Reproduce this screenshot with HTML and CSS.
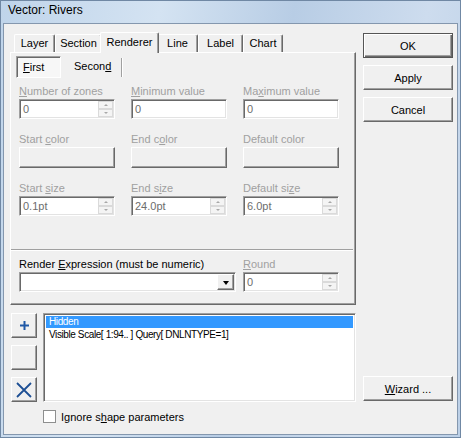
FILE: index.html
```html
<!DOCTYPE html>
<html>
<head>
<meta charset="utf-8">
<link rel="stylesheet" href="styles.css">
</head>
<body>
<div class="window">
  <div class="titlebar">Vector: Rivers</div>
  <div class="client">
    <div class="leftcol">
      <div class="tabctl">
        <div class="tabs">
          <div class="tab t-layer">Layer</div>
          <div class="tab t-section">Section</div>
          <div class="tab active t-renderer">Renderer</div>
          <div class="tab t-line">Line</div>
          <div class="tab t-label">Label</div>
          <div class="tab t-chart">Chart</div>
        </div>
        <div class="panel">
          <div class="subtabs">
            <div class="subtab pressed"><u>F</u>irst</div>
            <div class="subtab second">Secon<u>d</u></div>
          </div>
          <div class="grid">
            <div class="field">
              <div class="lbl"><u>N</u>umber of zones</div>
              <div class="edit"><span class="val">0</span><span class="spin"><span class="sb"><i class="up"></i></span><span class="sb"><i class="dn"></i></span></span></div>
            </div>
            <div class="field">
              <div class="lbl"><u>M</u>inimum value</div>
              <div class="edit"><span class="val">0</span></div>
            </div>
            <div class="field">
              <div class="lbl">Ma<u>x</u>imum value</div>
              <div class="edit"><span class="val">0</span></div>
            </div>
            <div class="field">
              <div class="lbl">Start <u>c</u>olor</div>
              <div class="cbtn"></div>
            </div>
            <div class="field">
              <div class="lbl">End c<u>o</u>lor</div>
              <div class="cbtn"></div>
            </div>
            <div class="field">
              <div class="lbl">Default color</div>
              <div class="cbtn"></div>
            </div>
            <div class="field">
              <div class="lbl">Start <u>s</u>ize</div>
              <div class="edit"><span class="val">0.1pt</span><span class="spin"><span class="sb"><i class="up"></i></span><span class="sb"><i class="dn"></i></span></span></div>
            </div>
            <div class="field">
              <div class="lbl">End s<u>i</u>ze</div>
              <div class="edit"><span class="val">24.0pt</span><span class="spin"><span class="sb"><i class="up"></i></span><span class="sb"><i class="dn"></i></span></span></div>
            </div>
            <div class="field">
              <div class="lbl">Default si<u>z</u>e</div>
              <div class="edit"><span class="val">6.0pt</span><span class="spin"><span class="sb"><i class="up"></i></span><span class="sb"><i class="dn"></i></span></span></div>
            </div>
          </div>
          <div class="sep"></div>
          <div class="exprrow">
            <div class="field expr">
              <div class="lbl enabled">Render <u>E</u>xpression (must be numeric)</div>
              <div class="edit combo"><span class="val"></span><span class="ddbtn"><i class="tri"></i></span></div>
            </div>
            <div class="field">
              <div class="lbl"><u>R</u>ound</div>
              <div class="edit"><span class="val">0</span><span class="spin"><span class="sb"><i class="up"></i></span><span class="sb"><i class="dn"></i></span></span></div>
            </div>
          </div>
        </div>
      </div>
      <div class="lower">
        <div class="sidebtns">
          <div class="btn sq">
            <svg width="9" height="9" viewBox="0 0 9 9"><path d="M4.5 0V9M0 4.5H9" stroke="#1f58a6" stroke-width="2"/></svg>
          </div>
          <div class="btn sq"></div>
          <div class="btn sq">
            <svg width="16" height="16" viewBox="0 0 16 16"><path d="M1 1L15 15M15 1L1 15" stroke="#1d4f94" stroke-width="1.8"/></svg>
          </div>
        </div>
        <div class="list">
          <div class="item sel">Hidden</div>
          <div class="item">Visible Scale[ 1:94.. ] Query[ DNLNTYPE=1]</div>
        </div>
      </div>
      <div class="check">
        <span class="box"></span>
        <span>Ignore s<u>h</u>ape parameters</span>
      </div>
    </div>
    <div class="rightcol">
      <div class="btn pbtn default">OK</div>
      <div class="btn pbtn">Apply</div>
      <div class="btn pbtn">Cancel</div>
      <div class="btn pbtn wizard"><u>W</u>izard ...</div>
    </div>
  </div>
</div>
</body>
</html>
```
FILE: styles.css
```css
* { box-sizing: border-box; }
html, body { margin: 0; padding: 0; }
body {
  width: 461px;
  height: 438px;
  overflow: hidden;
  font-family: "Liberation Sans", Arial, sans-serif;
  font-size: 11px;
  color: #000;
  background: #c6d8ec;
}
u { text-decoration: underline; text-underline-offset: 1px; }

.window {
  width: 461px;
  height: 438px;
  border: 1px solid #7088a4;
  background: linear-gradient(100deg, #bfd4ea 0%, #d4e3f2 30%, #b8cde5 55%, #cddcee 80%, #bcd0e7 100%);
  display: flex;
  flex-direction: column;
}
.titlebar {
  height: 22px;
  line-height: 19px;
  padding-left: 7px;
  font-size: 12px;
  color: #000;
}
.client {
  flex: 1;
  margin: 0 2px 2px 2px;
  border: 1px solid #8497ae;
  background: #f0f0f0;
  display: flex;
  padding: 8px 4px 0 6px;
  gap: 7px;
}
.leftcol {
  width: 346px;
  display: flex;
  flex-direction: column;
}
.rightcol {
  width: 90px;
  display: flex;
  flex-direction: column;
  padding-top: 1px;
  gap: 7px;
}

/* tabs */
.tabs {
  display: flex;
  align-items: flex-end;
  height: 20px;
  padding-left: 4px;
}
.tab {
  height: 18px;
  line-height: 17px;
  text-align: center;
  border-top: 1px solid #fff;
  border-left: 1px solid #fff;
  border-right: 1px solid #696969;
  box-shadow: inset -1px 0 #a0a0a0;
  border-radius: 2px 2px 0 0;
  background: #f0f0f0;
}
.tab.active {
  height: 21px;
  margin: 0 -2px -1px -2px;
  line-height: 18px;
  position: relative;
  z-index: 1;
}
.t-layer { width: 41px; }
.t-section { width: 47px; }
.t-renderer { width: 59px; }
.t-line { width: 41px; }
.t-label { width: 45px; }
.t-chart { width: 40px; }

.panel {
  height: 253px;
  border: 1px solid;
  border-color: #fff #696969 #696969 #fff;
  box-shadow: inset -1px -1px #a0a0a0;
  padding: 3px 0 0 0;
}
.subtabs {
  display: flex;
  padding-left: 5px;
  height: 22px;
}
.subtab {
  height: 22px;
  line-height: 21px;
}
.subtab.pressed {
  width: 45px;
  padding-left: 6px;
  border: 1px solid;
  border-color: #a0a0a0 #fff #fff #a0a0a0;
  box-shadow: inset 1px 1px #696969;
  background: #f7f7f7;
}
.subtab.second {
  width: 60px;
  margin-left: 1px;
  padding-left: 12px;
  border-right: 1px solid #a0a0a0;
  box-shadow: 1px 0 #fff;
  margin-top: 2px;
  height: 19px;
  line-height: 16px;
}

.grid {
  display: grid;
  grid-template-columns: repeat(3, 96px);
  column-gap: 16px;
  row-gap: 13px;
  margin: 6px 0 0 8px;
}
.field {
  display: flex;
  flex-direction: column;
}
.lbl {
  height: 15px;
  line-height: 15px;
  color: #a0a0a0;
  white-space: nowrap;
}
.lbl.enabled { color: #000; }

.edit {
  height: 20px;
  display: flex;
  align-items: center;
  background: #fff;
  border: 1px solid;
  border-color: #a0a0a0 #fff #fff #a0a0a0;
  box-shadow: inset 1px 1px #696969, inset -1px -1px #e3e3e3;
  padding: 2px 1px 2px 2px;
}
.val {
  flex: 1;
  color: #6d6d6d;
  padding-left: 1px;
  line-height: 14px;
}
.spin {
  width: 15px;
  height: 16px;
  display: flex;
  flex-direction: column;
}
.sb {
  flex: 1;
  border: 1px solid #dadada;
  background: #f4f4f4;
  display: flex;
  align-items: center;
  justify-content: center;
}
.up {
  width: 0; height: 0;
  border-left: 2px solid transparent;
  border-right: 2px solid transparent;
  border-bottom: 2px solid #a8a8a8;
}
.dn {
  width: 0; height: 0;
  border-left: 2px solid transparent;
  border-right: 2px solid transparent;
  border-top: 2px solid #a8a8a8;
}
.cbtn {
  height: 21px;
  border: 1px solid;
  border-color: #fff #696969 #696969 #fff;
  box-shadow: inset -1px -1px #a0a0a0;
  background: #f0f0f0;
}

.sep {
  margin-top: 33px;
  height: 2px;
  border-top: 1px solid #a0a0a0;
  border-bottom: 1px solid #fff;
  margin-right: 2px;
}
.exprrow {
  display: flex;
  gap: 7px;
  margin: 6px 0 0 8px;
}
.expr { width: 217px; }
.exprrow .field:last-child { width: 96px; }
.combo { padding-right: 1px; }
.ddbtn {
  width: 17px;
  height: 16px;
  border: 1px solid;
  border-color: #fff #696969 #696969 #fff;
  box-shadow: inset -1px -1px #a0a0a0;
  background: #f0f0f0;
  display: flex;
  align-items: center;
  justify-content: center;
}
.tri {
  width: 0; height: 0;
  border-left: 3.5px solid transparent;
  border-right: 3.5px solid transparent;
  border-top: 4px solid #000;
  margin-top: 1px;
}

/* lower */
.lower {
  display: flex;
  margin-top: 8px;
  gap: 6px;
  padding-left: 1px;
}
.sidebtns {
  display: flex;
  flex-direction: column;
  gap: 7px;
}
.btn {
  border: 1px solid;
  border-color: #fff #696969 #696969 #fff;
  box-shadow: inset -1px -1px #a0a0a0;
  background: #f0f0f0;
  display: flex;
  align-items: center;
  justify-content: center;
}
.sq { width: 26px; height: 25px; }
.list {
  width: 313px;
  height: 89px;
  background: #fff;
  border: 1px solid;
  border-color: #a0a0a0 #fff #fff #a0a0a0;
  box-shadow: inset 1px 1px #696969, inset -1px -1px #e3e3e3;
  padding: 2px;
}
.item {
  height: 13px;
  line-height: 13px;
  padding-left: 3px;
  font-size: 10px;
  letter-spacing: -0.4px;
  white-space: nowrap;
}
.item.sel {
  background: #3399ff;
  color: #fff;
  height: 12px;
  line-height: 12px;
}

.check {
  display: flex;
  align-items: center;
  margin: 8px 0 0 33px;
  gap: 5px;
  height: 13px;
}
.box {
  width: 13px;
  height: 13px;
  border: 1px solid #8e8f8f;
  background: #fff;
}

.pbtn {
  width: 90px;
  height: 25px;
}
.pbtn.default {
  border: 1px solid #555;
  box-shadow: inset 1px 1px #fff, inset -1px -1px #696969, inset -2px -2px #a0a0a0;
}
.wizard {
  margin-top: auto;
  margin-bottom: 33px;
}
```
